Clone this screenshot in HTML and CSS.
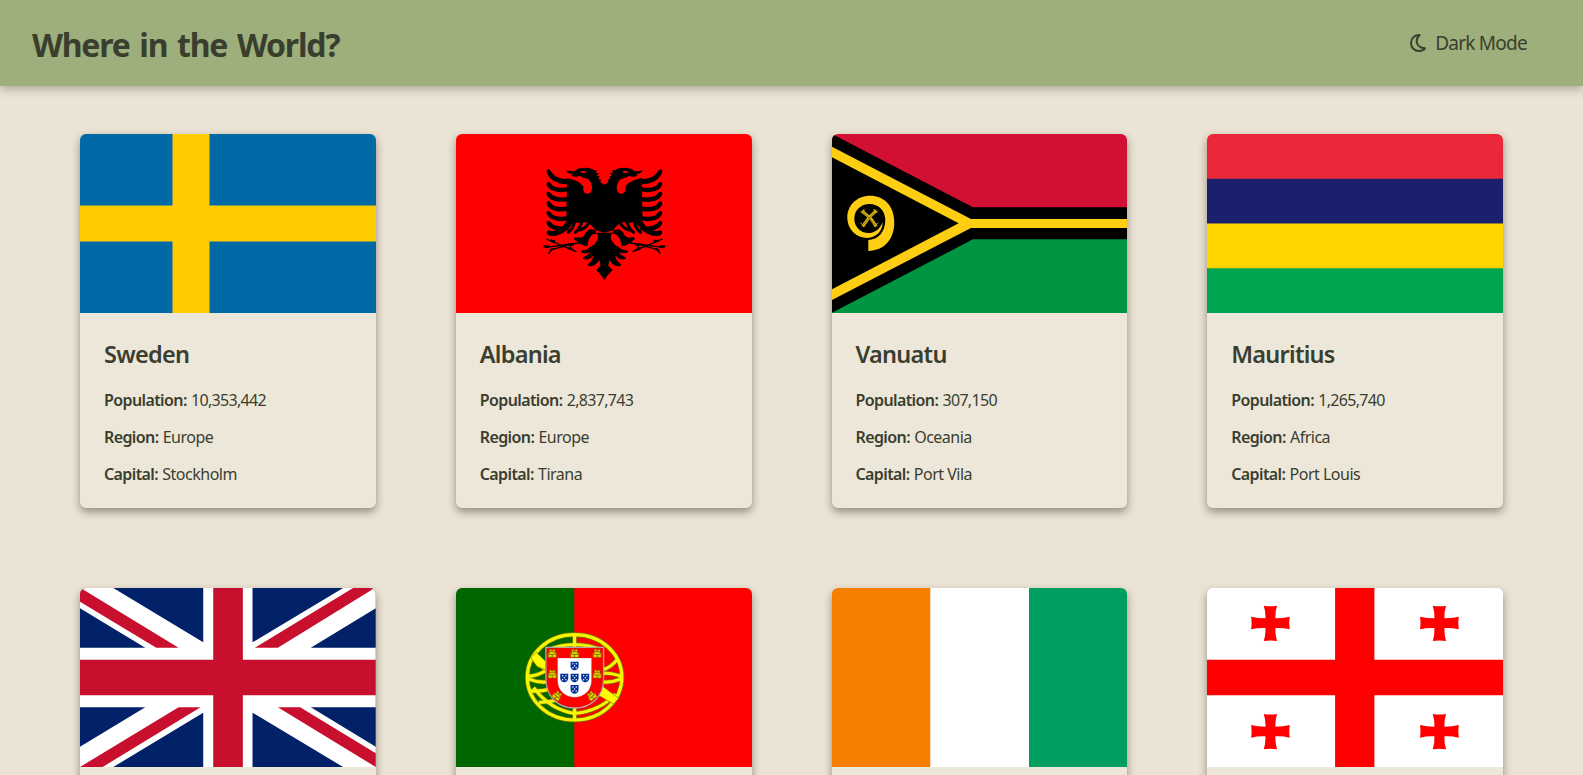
FILE: index.html
```html
<!DOCTYPE html>
<html lang="en">
<head>
<meta charset="utf-8">
<title>Where in the World?</title>
<link rel="stylesheet" href="styles.css">
</head>
<body>
<header class="header">
  <h1 class="title">Where in the World?</h1>
  <button class="mode" type="button">
    <svg class="moon" viewBox="0 0 48 54"><path d="M29 3C14 2 3 13 3 27C3 41 14 51 27 51C35 51 42 48 45 43C31 43 20 34 20 22C20 14 24 7 29 3Z" fill="none" stroke="currentColor" stroke-width="6" stroke-linejoin="round"/></svg>
    <span>Dark Mode</span>
  </button>
</header>
<main class="grid">
  <article class="card">
    <svg class="flag" viewBox="0 0 295.75 179" preserveAspectRatio="none">
      <path fill="#006aa7" d="M0 0H296V179H0z"/><path fill="#fc0" d="M92.5 0H129.5V179H92.5zM0 71.6H296V107.4H0z"/>
    </svg>
    <div class="info"><h2 class="name">Sweden</h2>
      <p class="row"><b>Population:</b> <span class="number">10,353,442</span></p><p class="row"><b>Region:</b> <span class="value">Europe</span></p><p class="row"><b>Capital:</b> <span class="value">Stockholm</span></p></div>
  </article>
  <article class="card">
    <svg class="flag" viewBox="0 0 295.75 179" preserveAspectRatio="none">
      <path fill="red" d="M0 0H296V179H0z"/>
      <defs>
        <path id="feather" d="M79 0C78-9 88-9 92-2C99 9 118 13 145 8V21C115 28 83 20 79 0Z"/>
        <g id="half-eagle">
          <path d="M79 64C77 55 88 56 93 65C103 80 120 88 142 86V103C115 104 83 90 79 64Z"/>
          <use href="#feather" y="103"/><use href="#feather" y="132"/><use href="#feather" y="161"/><use href="#feather" y="190"/><use href="#feather" y="219"/>
          <path d="M79 248C78 240 88 240 94 243C115 244 132 228 142 207L162 213C145 240 125 257 97 258C86 258 80 254 79 248Z"/>
          <path d="M256 104H252L240 96L243 90L234 86L239 80L230 77L236 70L226 68L231 62L220 60C211 54 195 52 184 55C175 54 168 57 165 62C154 65 145 63 138 61C141 70 149 72 160 72L152 75C158 82 170 81 178 77C185 83 196 84 204 88C218 99 220 127 205 131C191 133 187 121 190 111C181 95 162 90 141 84L138 205C151 219 174 220 200 217C220 230 230 240 228 257C222 280 210 286 198 288C181 288 170 273 161 268L164 261L180 263L192 257C194 248 205 232 223 240L256 249Z"/>
          <path d="M163 215Q158 238 144 247M184 219Q177 239 165 247M203 222Q196 236 178 240" fill="none" stroke="#000" stroke-width="9" stroke-linecap="round"/>
          <path d="M256 248H229C232 263 225 282 209 291C198 304 188 299 181 302C182 311 199 312 209 305C202 319 193 318 187 324C193 333 210 329 221 315C215 336 207 338 202 344C211 355 230 344 237 329L241 347L228 360L240 373L252 388H256Z"/>
          <path fill="red" d="M202 289C202 268 213 251 226 251C236 252 235 266 227 277C219 288 209 294 202 289Z"/>
          <ellipse cx="189" cy="66" rx="9" ry="2.7" fill="red"/>
          <g fill="none" stroke="#000" stroke-width="4"><path d="M78 267L168 305M76 292L176 279M85 312L93 299L142 286M96 275L104 270M151 295V285L145 282"/><path stroke-width="7" d="M90 271L104 277M70 289L87 290M89 303L97 296M143 294L159 300M143 284L161 283"/></g>
        </g>
      </defs>
      <g transform="translate(64.25 16) scale(.33333)"><use href="#half-eagle"/><use href="#half-eagle" transform="translate(505 0) scale(-1 1)"/></g>
    </svg>
    <div class="info"><h2 class="name">Albania</h2>
      <p class="row"><b>Population:</b> <span class="number">2,837,743</span></p><p class="row"><b>Region:</b> <span class="value">Europe</span></p><p class="row"><b>Capital:</b> <span class="value">Tirana</span></p></div>
  </article>
  <article class="card">
    <svg class="flag" viewBox="0 0 295.75 179" preserveAspectRatio="none">
      <path fill="#d21034" d="M0 0H296V90H0z"/><path fill="#009543" d="M0 89.5H296V179H0z"/>
      <g transform="translate(-6.7 -9) scale(.33333)">
        <path d="M20 27L443 247H920V343H443L20 563Z"/>
        <path fill="#fdce12" d="M20 65L437 282H920V309H437L20 525Z"/>
        <path d="M20 97L400 295L20 493Z"/>
        <path fill="#fdce12" d="M129 378C178 377 207 343 207 292C207 241 175 212 134 212C95 212 66 241 66 277C66 314 94 339 126 339C153 338 173 317 172 291C165 310 151 323 132 324C107 325 87 306 87 281C87 256 107 237 132 237C160 237 180 257 180 285C180 321 158 344 129 345Z"/>
        <g fill="none" stroke="#d9b011"><path stroke-width="9" d="M110 258L137 281L153 304M153 257L130 279L112 304"/><path stroke="#6b5708" stroke-width="2" d="M107 254L156 306M156 254L107 306"/><path stroke-width="3" d="M116 252V261H106M147 252V261H158M106 293L117 305M158 293L147 305"/></g>
      </g>
    </svg>
    <div class="info"><h2 class="name">Vanuatu</h2>
      <p class="row"><b>Population:</b> <span class="number">307,150</span></p><p class="row"><b>Region:</b> <span class="value">Oceania</span></p><p class="row"><b>Capital:</b> <span class="value">Port Vila</span></p></div>
  </article>
  <article class="card">
    <svg class="flag" viewBox="0 0 295.75 179" preserveAspectRatio="none">
      <path fill="#ea2839" d="M0 0H296V45H0z"/><path fill="#1a206d" d="M0 44.75H296V90H0z"/><path fill="#ffd500" d="M0 89.5H296V135H0z"/><path fill="#00a551" d="M0 134.25H296V179H0z"/>
    </svg>
    <div class="info"><h2 class="name">Mauritius</h2>
      <p class="row"><b>Population:</b> <span class="number">1,265,740</span></p><p class="row"><b>Region:</b> <span class="value">Africa</span></p><p class="row"><b>Capital:</b> <span class="value">Port Louis</span></p></div>
  </article>
  <article class="card">
    <svg class="flag" viewBox="30 24 888 537" preserveAspectRatio="none">
      <path fill="#012169" d="M30 24H918V561H30z"/>
      <path fill="#fff" d="M30 24H130L400 187V24H548V187L820 24H918V85L723 203H918V382H723L918 500V561H820L548 398V561H400V398L130 561H30V500L226 382H30V203H226L30 85Z"/>
      <path fill="#c8102e" d="M430 24H519V239H918V346H519V561H430V346H30V239H430ZM30 24L38 28L326 203H259L30 65ZM555 203L850 24H915L624 203ZM326 382H392L98 561H30ZM624 382H691L918 520V561Z"/>
    </svg>
    <div class="info"></div>
  </article>
  <article class="card">
    <svg class="flag" viewBox="0 0 295.75 179" preserveAspectRatio="none">
      <path fill="#060" d="M0 0H119V179H0z"/><path fill="red" d="M118.3 0H296V179H118.3z"/>
      <defs>
        <g id="quina"><path fill="#039" d="M-12-12H12V2C12 9 7 14 0 14S-12 9-12 2Z"/><g fill="#fff"><circle cx="-5" cy="-6" r="2.2"/><circle cx="5" cy="-6" r="2.2"/><circle r="2.2"/><circle cx="-5" cy="6" r="2.2"/><circle cx="5" cy="6" r="2.2"/></g></g>
        <g id="castle"><path fill="#e6dc00" stroke="#8a6a00" stroke-width="2" d="M-12 12V-1H-8V-12H-3V-9H3V-12H8V-1H12V12Z"/><path stroke="#8a6a00" stroke-width="3" d="M-10 3H10M0 12V5M-6-5H6"/></g>
        <path id="sphere" d="M193 44C274 44 335 102 335 172S274 300 193 300S51 242 51 172S112 44 193 44ZM193 41V303M67 112Q85 141 107 146M52 169Q80 168 107 152M52 176Q80 188 107 186M62 213Q90 215 124 206M70 203Q120 270 193 280Q266 275 316 222M108 92Q193 55 279 92M280 148Q300 144 322 118M280 160Q305 158 334 170M280 186Q306 188 334 176M86 246Q105 249 150 238"/>
      </defs>
      <g transform="translate(54.25 32) scale(.33333)">
        <use href="#sphere" fill="none" stroke="#77780a" stroke-width="14"/>
        <use href="#sphere" fill="none" stroke="#f6f600" stroke-width="9.5"/>
        <path fill="#ff0" stroke="#77780a" stroke-width="2" d="M62 113L78 97L106 124V150L80 139ZM279 200L325 235L310 252L258 222Z"/>
        <path fill="red" stroke="#b8a3a3" stroke-width="4" d="M107 82H280V178C280 230 242 264 193 264S107 230 107 178Z"/>
        <path fill="#fff" stroke="#c3342e" stroke-width="1" d="M142 114H244V181C244 212 222 232 193 232S142 212 142 181Z"/>
        <use href="#quina" x="193" y="137"/><use href="#quina" x="162" y="173"/><use href="#quina" x="193" y="173"/><use href="#quina" x="225" y="173"/><use href="#quina" x="193" y="207"/>
        <use href="#castle" x="126" y="100"/><use href="#castle" x="193" y="100"/><use href="#castle" x="261" y="100"/><use href="#castle" x="126" y="162"/><use href="#castle" x="261" y="162"/>
        <use href="#castle" transform="translate(141 227) rotate(38)"/><use href="#castle" transform="translate(244 227) rotate(-38)"/>
      </g>
    </svg>
    <div class="info"></div>
  </article>
  <article class="card">
    <svg class="flag" viewBox="0 0 295.75 179" preserveAspectRatio="none"><path fill="#f77f00" d="M0 0H98.5V179H0z"/><path fill="#fff" d="M98.5 0H197V179H98.5z"/><path fill="#009e60" d="M197 0H296V179H197z"/></svg>
    <div class="info"></div>
  </article>
  <article class="card">
    <svg class="flag" viewBox="21.75 24 887.25 537" preserveAspectRatio="none">
      <defs><path id="cross" fill="red" d="M-20-53Q0-50 20-53Q14-35 15-15Q38-15 58-20Q55 0 58 18Q38 13 15 14Q14 35 20 53Q0 50-20 53Q-14 35-15 14Q-38 13-58 18Q-55 0-58-20Q-38-15-15-15Q-14-35-20-53Z"/></defs>
      <path fill="#fff" d="M20 24H920V561H20z"/><path fill="red" d="M406 24H524V239H920V346H524V561H406V346H20V239H406Z"/>
      <use href="#cross" x="212" y="130"/><use href="#cross" x="719" y="130"/><use href="#cross" x="212" y="455"/><use href="#cross" x="719" y="455"/>
    </svg>
    <div class="info"></div>
  </article>
</main>
</body>
</html>
```
FILE: styles.css
```css
* { box-sizing: border-box; margin: 0; padding: 0; }
body {
  height: 100vh;
  overflow: hidden;
  background: #ebe4d5;
  color: #3a3e2f;
  font-family: "Segoe UI", "Noto Sans", sans-serif;
  font-size: 16px;
}
.header {
  display: flex;
  align-items: center;
  justify-content: space-between;
  height: 86px;
  padding: 0 56px 0 32px;
  background: #9daf7a;
  box-shadow: 0 4px 8px rgba(58, 50, 30, .3);
}
.title { font-size: 32px; line-height: 44px; font-weight: 700; padding-top: 3px; letter-spacing: -1.2px; word-spacing: 2.6px; }
.mode {
  display: flex;
  align-items: center;
  gap: 9px;
  border: 0;
  background: none;
  color: inherit;
  font: 19px/26px "Segoe UI", "Noto Sans", sans-serif;
  letter-spacing: -.75px;
}
.moon { width: 16px; height: 18px; }
.grid {
  display: grid;
  grid-template-columns: repeat(4, 1fr);
  gap: 80px;
  padding: 48px 80px;
}
.card {
  height: 374px;
  overflow: hidden;
  border-radius: 6px;
  background: #ede7d9;
  box-shadow: 0 4px 8px rgba(40, 36, 24, .45);
}
.flag { display: block; width: 100%; height: 179px; }
.info { padding: 23px 24px; }
.name { font-size: 23.5px; line-height: 36px; font-weight: 600; margin-bottom: 16px; letter-spacing: -.75px; }
.row { line-height: 24px; margin-bottom: 13px; }
.row b { font-weight: 600; letter-spacing: -.6px; }
.value { letter-spacing: -.5px; }
.number { letter-spacing: -.67px; }
```
